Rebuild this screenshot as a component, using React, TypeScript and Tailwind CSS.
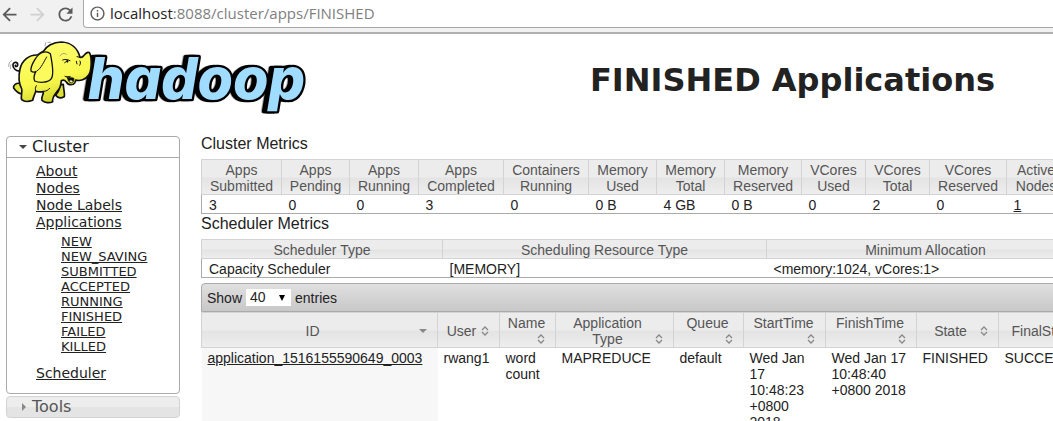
import { MdArrowBack, MdArrowForward, MdInfoOutline, MdRefresh } from 'react-icons/md'

const appStates = ['NEW', 'NEW_SAVING', 'SUBMITTED', 'ACCEPTED', 'RUNNING', 'FINISHED', 'FAILED', 'KILLED']

const clusterMetrics = [
  { title: 'Apps Submitted', value: '3', width: 'w-[80px]' },
  { title: 'Apps Pending', value: '0', width: 'w-[68px]' },
  { title: 'Apps Running', value: '0', width: 'w-[69px]' },
  { title: 'Apps Completed', value: '3', width: 'w-[85px]' },
  { title: 'Containers Running', value: '0', width: 'w-[85px]' },
  { title: 'Memory Used', value: '0 B', width: 'w-[68px]' },
  { title: 'Memory Total', value: '4 GB', width: 'w-[68px]' },
  { title: 'Memory Reserved', value: '0 B', width: 'w-[77px]' },
  { title: 'VCores Used', value: '0', width: 'w-[64px]' },
  { title: 'VCores Total', value: '2', width: 'w-[64px]' },
  { title: 'VCores Reserved', value: '0', width: 'w-[77px]' },
  { title: 'Active Nodes', value: '1', width: 'w-[59px]', href: '#nodes' },
]

const schedulerMetrics = [
  { title: 'Scheduler Type', value: 'Capacity Scheduler', width: 'w-[241px]' },
  { title: 'Scheduling Resource Type', value: '[MEMORY]', width: 'w-[324px]' },
  { title: 'Minimum Allocation', value: '<memory:1024, vCores:1>', width: 'w-[318px]' },
]

const appColumns = [
  { title: 'ID', value: 'application_1516155590649_0003', width: 'w-[236px]', href: '#app' },
  { title: 'User', value: 'rwang1', width: 'w-[62px]' },
  { title: 'Name', value: 'word count', width: 'w-[56px]' },
  { title: 'Application Type', value: 'MAPREDUCE', width: 'w-[118px]' },
  { title: 'Queue', value: 'default', width: 'w-[70px]' },
  { title: 'StartTime', value: 'Wed Jan 17 10:48:23 +0800 2018', width: 'w-[82px]' },
  { title: 'FinishTime', value: 'Wed Jan 17 10:48:40 +0800 2018', width: 'w-[91px]' },
  { title: 'State', value: 'FINISHED', width: 'w-[82px]' },
  { title: 'FinalStatus', value: 'SUCCEEDED', width: 'w-[110px]' },
]

type Metric = {
  title: string
  value: string
  width: string
  href?: string
}

function BrowserBar() {
  return (
    <div className="flex h-[34px] items-start border-b-2 border-[#b0b0b0] bg-[#f1f1f1] text-[#5a5a5a]">
      <div className="flex h-7 w-[83px] shrink-0 items-center gap-[7px]">
        <button type="button" aria-label="Back" className="-ml-px">
          <MdArrowBack size={21} />
        </button>
        <button type="button" aria-label="Forward" className="text-[#d0d0d0]">
          <MdArrowForward size={21} />
        </button>
        <button type="button" aria-label="Reload">
          <MdRefresh size={21} />
        </button>
      </div>
      <div className="flex h-7 flex-1 items-center gap-1 rounded-bl border-b border-l border-[#a8a8a8] bg-white pl-[5px] font-['Open_Sans',sans-serif] text-[15px]">
        <MdInfoOutline size={17} className="shrink-0" />
        <p className="text-[#808080]">
          <span className="text-[#222222]">localhost</span>:8088/cluster/apps/FINISHED
        </p>
      </div>
    </div>
  )
}

function HadoopLogo() {
  return (
    <svg viewBox="0 105 960 240" className="h-20 w-80" role="img" aria-label="hadoop">
      <defs>
        <linearGradient id="hide" x1="0" y1="0" x2="0.3" y2="1">
          <stop offset="0" stopColor="#ffff78" />
          <stop offset="0.7" stopColor="#f8f84c" />
          <stop offset="1" stopColor="#d6d82e" />
        </linearGradient>
      </defs>
      <text
        x="264"
        y="298"
        fill="#9fdcff"
        stroke="#000"
        strokeWidth="14"
        strokeLinejoin="round"
        className="font-[Inter,sans-serif] text-[172px] font-extrabold italic [filter:drop-shadow(-10px_0_0_#000)] [paint-order:stroke]"
      >
        hadoop
      </text>
      <g stroke="#111" strokeWidth="5" strokeLinejoin="round" strokeLinecap="round">
        <path d="M60 212C49 216 37 203 39 193C42 184 54 186 53 195C52 201 45 201 46 196" fill="none" />
        <path d="M60 250C48 248 39 256 41 264C47 272 52 279 62 281" fill="#e6e73a" />
        <path
          d="M170 255C181 264 178 273 167 286C174 296 185 294 193 290C195 278 190 268 190 253Z"
          fill="#dfe035"
        />
        <path
          d="M112 165C87 164 66 181 60 207C54 233 57 251 65 267C68 278 61 290 65 299C73 306 87 305 98 301C100 290 106 280 107 274C116 276 125 276 130 275C132 282 122 291 126 301C135 309 149 310 158 305C156 294 163 285 170 276C180 268 183 256 184 242C190 239 194 240 199 246C204 254 211 256 220 253C226 250 226 246 227 240C240 244 257 239 266 225C275 212 276 176 269 159C265 154 258 159 253 165C248 170 246 174 240 172C233 145 213 127 184 126C159 126 139 139 130 154C123 157 117 162 112 165Z"
          fill="url(#hide)"
        />
        <path d="M201 231C208 234 216 232 222 235C222 244 219 249 213 249C206 247 204 240 201 231Z" fill="#111" strokeWidth="2" />
        <path d="M208 243C212 238 218 241 218 246C214 249 210 247 208 243Z" fill="#f3f0c0" stroke="none" />
        <path
          d="M151 161C137 149 117 158 105 178C95 194 92 207 93 213C98 217 106 218 108 214C101 225 101 238 104 243C118 249 145 249 154 236C162 224 158 195 151 161Z"
          fill="#fbfb5c"
          strokeWidth="4"
        />
        <path
          d="M140 171C133 182 123 206 112 212M188 180C194 177 202 178 210 182M194 188L204 181M231 170L239 172M240 183C242 187 242 191 239 196M229 184L231 192M195 229C200 232 205 229 211 230M107 274C105 268 106 262 109 257M131 274C139 274 145 270 149 265"
          fill="none"
          strokeWidth="3"
        />
        <ellipse cx="202" cy="184" rx="3" ry="4" fill="#111" stroke="none" />
        <path
          d="M180 168C185 160 193 158 199 163M135 138L137 128M144 127L151 127M26 199C26 190 29 185 35 182M32 206C30 200 31 197 33 194"
          fill="none"
          stroke="#777"
          strokeWidth="2"
        />
      </g>
    </svg>
  )
}

function Sidebar() {
  return (
    <nav className="w-[174px] shrink-0 font-['DejaVu_Sans',Verdana,sans-serif] text-[#222222]">
      <div className="rounded border border-[#aaaaaa]">
        <button type="button" className="flex h-[21px] w-full items-center gap-[5px] border-b border-[#aaaaaa] pl-3 text-base">
          <svg viewBox="0 0 8 4" className="h-1 w-2">
            <path d="M0 0h8L4 4z" fill="#454545" />
          </svg>
          <span>Cluster</span>
        </button>
        <ul className="pt-[5px] pb-[11px] pl-[29px] text-sm leading-[17px] underline">
          <li><a href="#about">About</a></li>
          <li><a href="#nodes">Nodes</a></li>
          <li><a href="#labels">Node Labels</a></li>
          <li>
            <a href="#apps">Applications</a>
            <ul className="pt-[3px] pb-[11px] pl-[25px] text-[13px] leading-[15px]">
              {appStates.map((state) => (
                <li key={state}><a href={`#${state}`}>{state}</a></li>
              ))}
            </ul>
          </li>
          <li><a href="#scheduler">Scheduler</a></li>
        </ul>
      </div>
      <button
        type="button"
        className="mt-[2px] flex h-[22px] w-full items-center gap-[6px] rounded border border-[#d3d3d3] bg-linear-to-b from-[#ededed] from-50% to-[#e4e4e4] to-50% pl-[15px] text-base text-[#555555]"
      >
        <svg viewBox="0 0 4 8" className="h-2 w-1">
          <path d="M0 0v8l4-4z" fill="#888888" />
        </svg>
        Tools
      </button>
    </nav>
  )
}

const headCell = 'border border-[#d3d3d3] bg-linear-to-b from-[#ececec] from-50% via-[#e3e3e3] via-50% to-[#eeeeee] px-1 pt-[2px] font-normal text-[#555555]'

function MetricsTable({ metrics }: { metrics: Metric[] }) {
  return (
    <table className="w-px table-fixed border-collapse border border-[#aaaaaa] text-sm leading-4">
      <thead>
        <tr>
          {metrics.map((metric) => (
            <th key={metric.title} className={`${headCell} ${metric.width}`}>{metric.title}</th>
          ))}
        </tr>
      </thead>
      <tbody>
        <tr>
          {metrics.map((metric) => (
            <td key={metric.title} className="px-[7px] pt-[2px]">
              {metric.href ? <a href={metric.href} className="underline">{metric.value}</a> : metric.value}
            </td>
          ))}
        </tr>
      </tbody>
    </table>
  )
}

function SortIcon({ active }: { active: boolean }) {
  return (
    <svg viewBox="0 0 8 10" className="h-[10px] w-2 shrink-0" fill="none" stroke="#888888" strokeWidth="1.3">
      {active ? <path d="M0 3h8L4 7z" fill="#888888" stroke="none" /> : <path d="M1 4l3-3 3 3M1 6l3 3 3-3" />}
    </svg>
  )
}

function AppsTable() {
  return (
    <table className="w-full table-fixed border-collapse text-sm leading-4">
      <thead>
        <tr>
          {appColumns.map((column) => {
            const stacked = ['Name', 'Queue', 'StartTime', 'FinishTime'].includes(column.title)
            return (
              <th key={column.title} className={`${headCell} ${column.width} h-[35px]`}>
                <button
                  type="button"
                  className={stacked ? 'flex w-full flex-col items-center pr-[6px] pl-1' : 'flex w-full items-center pr-[6px]'}
                >
                  <span className="flex-1">{column.title}</span>
                  <span className={column.title === 'Application Type' || stacked ? 'flex h-4 items-center self-end' : 'flex h-4 items-center'}>
                    <SortIcon active={column.title === 'ID'} />
                  </span>
                </button>
              </th>
            )
          })}
        </tr>
      </thead>
      <tbody>
        <tr className="align-top">
          {appColumns.map((column) => (
            <td key={column.title} className="px-[6px] py-[2px] first:bg-[#f7f7f7]">
              {column.href ? <a href={column.href} className="underline">{column.value}</a> : column.value}
            </td>
          ))}
        </tr>
      </tbody>
    </table>
  )
}

export default function App() {
  return (
    <div className="h-screen overflow-hidden bg-white text-[#222222]">
      <BrowserBar />
      <header className="flex h-[102px] items-start pt-px">
        <HadoopLogo />
        <h1 className="flex-1 pt-[25px] pr-[58px] text-right font-['DejaVu_Sans',Verdana,sans-serif] text-[32px] leading-[40px] font-bold whitespace-nowrap">
          FINISHED Applications
        </h1>
      </header>
      <div className="flex items-start gap-[21px] pl-[6px]">
        <Sidebar />
        <main className="min-w-0 flex-1 font-['Liberation_Sans',Arial,sans-serif]">
          {/* the tables run past the right edge of narrow windows */}
          <div className="min-w-[907px]">
            <h2 className="pb-[7px] text-base leading-4">Cluster Metrics</h2>
            <MetricsTable metrics={clusterMetrics} />
            <h2 className="pt-px pb-[6px] text-base leading-[18px]">Scheduler Metrics</h2>
            <MetricsTable metrics={schedulerMetrics} />
            <div className="mt-[5px] flex h-[29px] items-center gap-1 rounded-tl border border-[#aaaaaa] bg-linear-to-b from-[#e0e0e0] to-[#c8c8c8] pl-[5px] text-sm">
              <label htmlFor="page-length">Show</label>
              <div className="grid items-center bg-white">
                <select id="page-length" defaultValue="40" className="col-start-1 row-start-1 h-[17px] w-[45px] appearance-none pl-1 text-sm leading-[17px]">
                  <option>20</option>
                  <option>40</option>
                  <option>60</option>
                </select>
                <svg viewBox="0 0 6 6" className="pointer-events-none col-start-1 row-start-1 mr-[6px] size-[6px] justify-self-end">
                  <path d="M0 0h6L3 6z" fill="#000" />
                </svg>
              </div>
              <span>entries</span>
            </div>
            <AppsTable />
          </div>
        </main>
      </div>
    </div>
  )
}
